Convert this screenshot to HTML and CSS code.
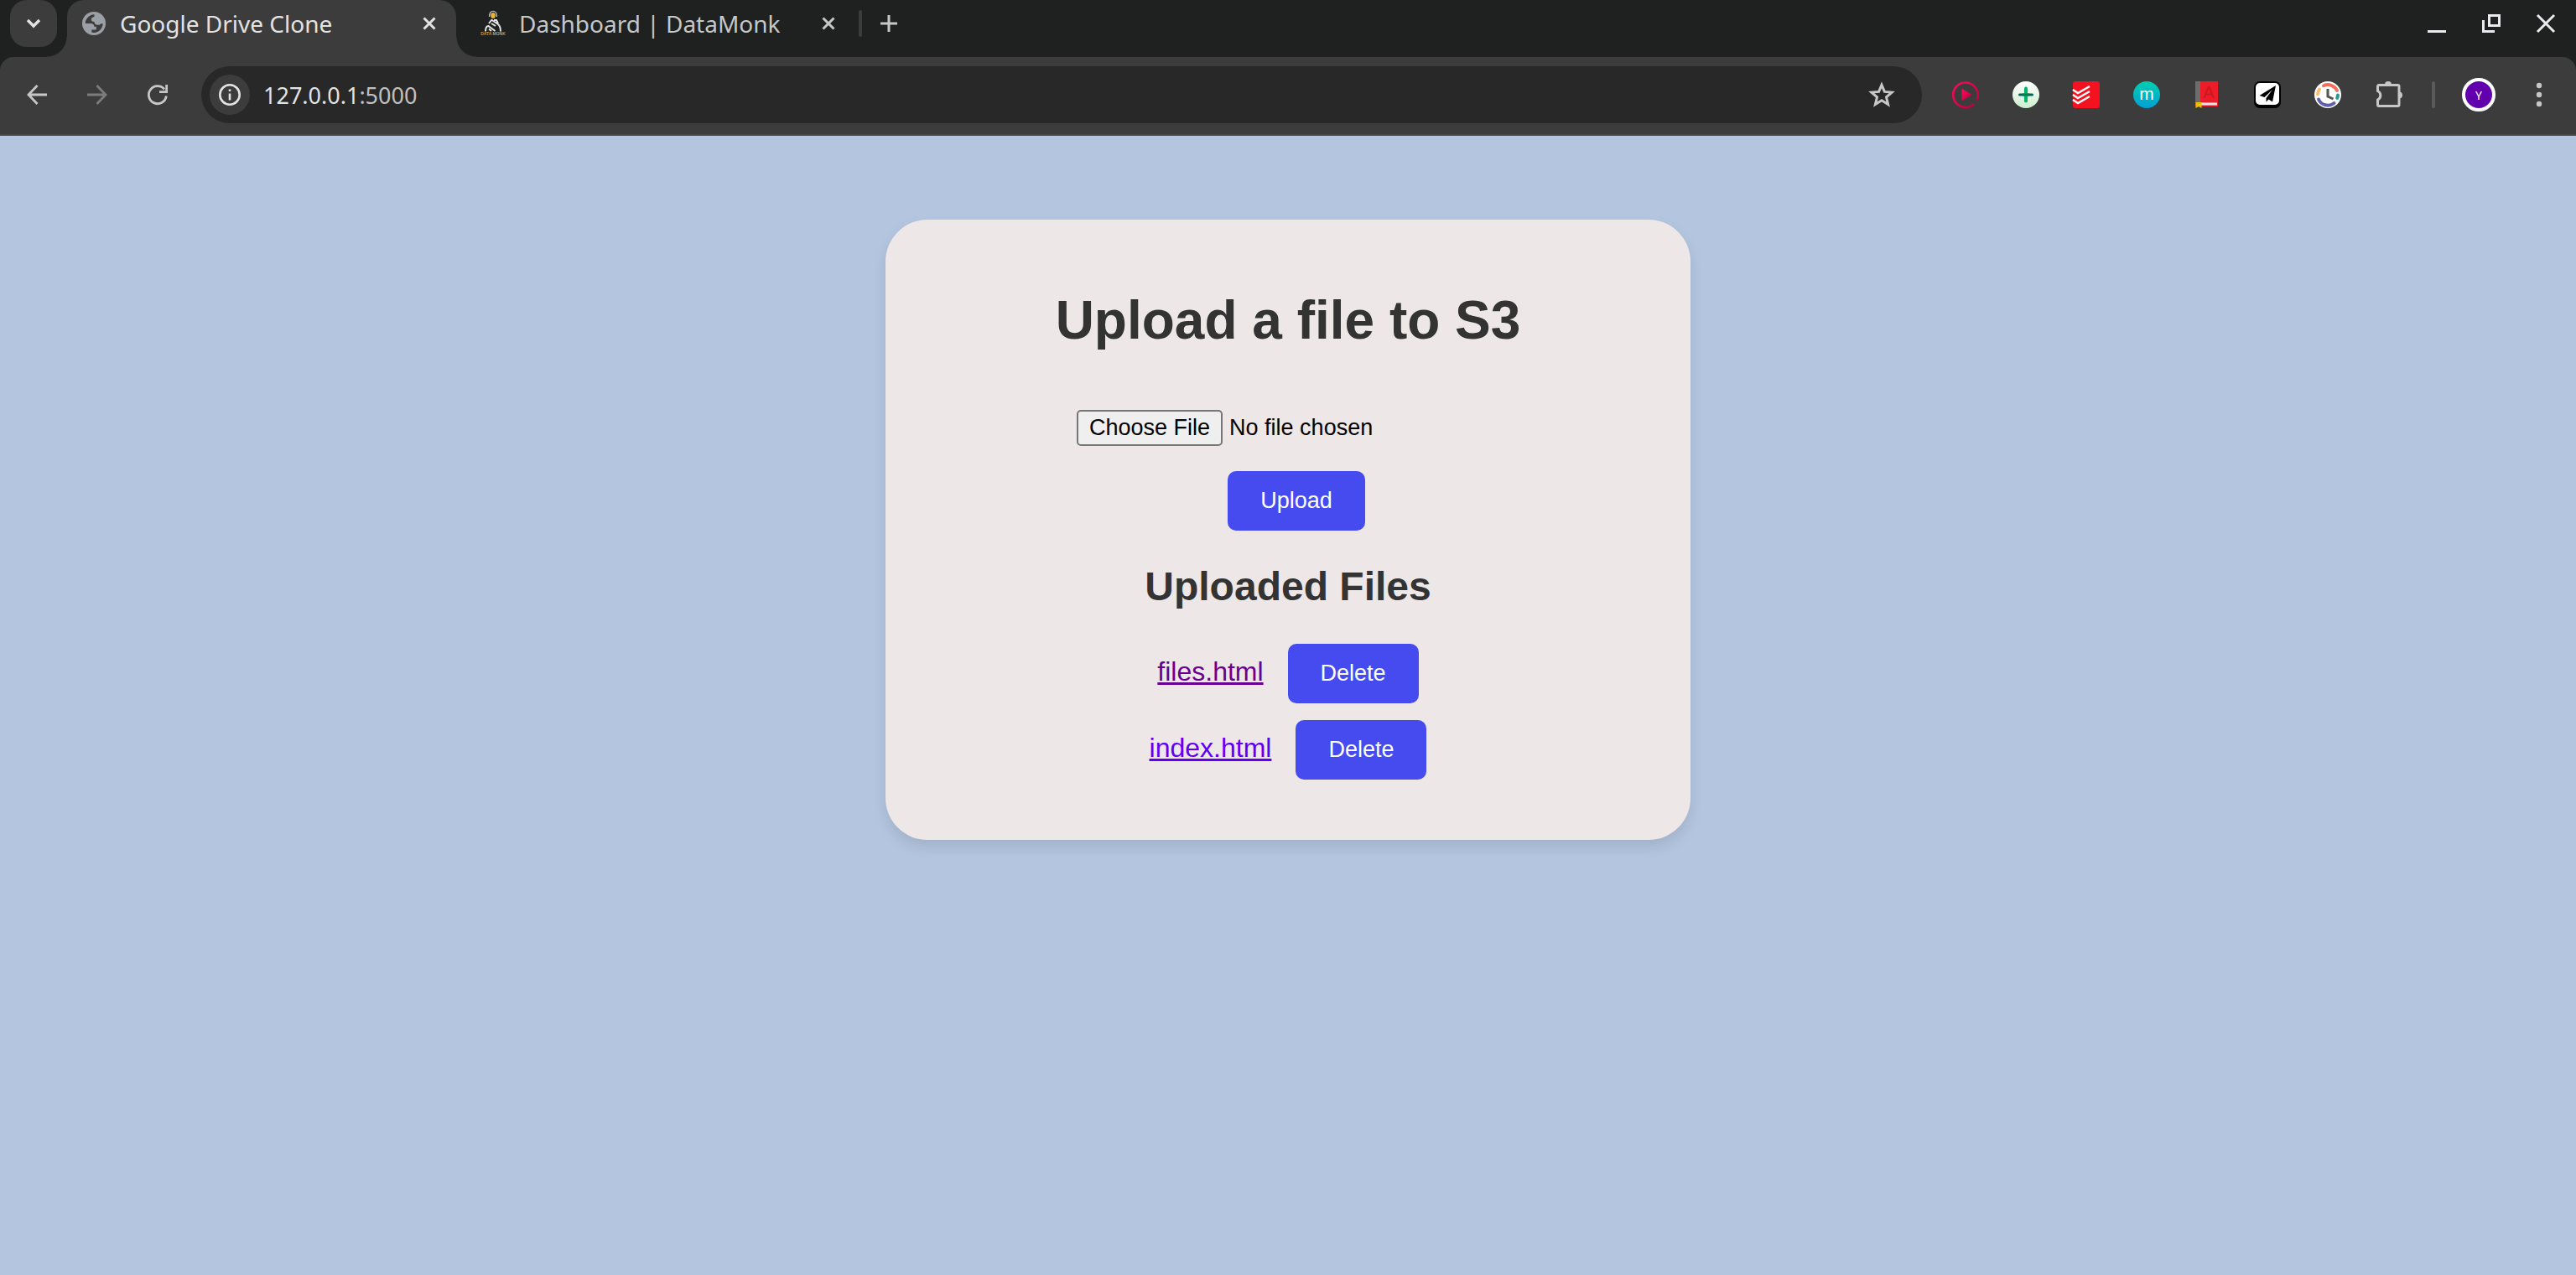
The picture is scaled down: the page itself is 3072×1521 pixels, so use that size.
FILE: index.html
```html
<!DOCTYPE html>
<html lang="en">
<head>
<meta charset="utf-8">
<title>Google Drive Clone</title>
<link rel="stylesheet" href="styles.css">
</head>
<body>
<header class="browser">
  <div class="tabstrip">
    <button class="tab-search" aria-label="Search tabs">
      <svg width="20" height="20" viewBox="0 0 20 20"><path d="M3 6l7 7 7-7" fill="none" stroke="#e3e3e3" stroke-width="3.4"/></svg>
    </button>
    <div class="tab tab-active">
      <svg class="favicon" width="28" height="28" viewBox="0 0 28 28"><circle cx="14" cy="14" r="14" fill="#9aa0a6"/><path d="M14.500 3.200c-3.500 0-6.500 1.600-8.800 4.800-1.300 1.800-2 3.800-2 6h6.600c2.800 0 4 1.500 4 3.800h2.500v3.800h-5.500v3c4.500 1 9-.8 11.200-4.200 1.300-1.800 2-3.800 2.200-6.200h-2.500c-.6 1-1.800 1.500-3.500 1.500-2.700 0-4.200-1.200-4.200-3.800-2.300 0-3.600-.8-3.600-2.500 0-2.800 1.800-2.600 3.600-3.700z" fill="#3c3c3c"/></svg>
      <span class="tab-title">Google Drive Clone</span>
      <button class="icon-button" aria-label="Close tab"><svg width="16" height="16" viewBox="0 0 16 16"><path d="M1.500 1.500l13 13M14.500 1.500l-13 13" stroke="#e3e3e3" stroke-width="3"/></svg></button>
    </div>
    <div class="tab tab-idle">
      <svg class="favicon" width="32" height="32" viewBox="0 0 32 32"><path d="M11.500 8c0-9 9-9 9 0" fill="none" stroke="#cfcfcf" stroke-width="1.200"/><ellipse cx="16" cy="6.500" rx="2.800" ry="3.600" fill="#e8b23c"/><path d="M7 25.500c0-4 .5-6.500 3.500-6.500l8 6M25 25.500c0-4-.5-6.500-3-8.500l-8-5.500M11 16l3.500-4.500M17 12h3l2 4M19 19l-5-3M14 25l-3-2.500" fill="none" stroke="#e4e4e4" stroke-width="2"/><text x="16" y="30" class="logo-text"><tspan fill="#c9963a">DATA</tspan><tspan fill="#a0a0a0"> MONK</tspan></text></svg>
      <span class="tab-title">Dashboard | DataMonk</span>
      <button class="icon-button" aria-label="Close tab"><svg width="16" height="16" viewBox="0 0 16 16"><path d="M1.500 1.500l13 13M14.500 1.500l-13 13" stroke="#c7c7c7" stroke-width="3"/></svg></button>
    </div>
    <span class="tab-divider"></span>
    <button class="icon-button new-tab" aria-label="New tab"><svg width="20" height="20" viewBox="0 0 20 20"><path d="M10 0v20M0 10h20" stroke="#c7c7c7" stroke-width="3"/></svg></button>
    <div class="window-controls">
      <button class="icon-button" aria-label="Minimize"><svg width="22" height="22" viewBox="0 0 22 22"><path d="M0 20.500h22" stroke="#e8eaed" stroke-width="3"/></svg></button>
      <button class="icon-button" aria-label="Restore"><svg width="22" height="22" viewBox="0 0 22 22"><path d="M8.500 1.500h12v12h-12zM1.500 7v13.500H15" fill="none" stroke="#e8eaed" stroke-width="3"/></svg></button>
      <button class="icon-button" aria-label="Close"><svg width="22" height="22" viewBox="0 0 22 22"><path d="M1 1l20 20M21 1L1 21" stroke="#e8eaed" stroke-width="3"/></svg></button>
    </div>
  </div>
  <div class="toolbar">
    <nav class="nav-buttons">
      <button class="icon-button" aria-label="Back"><svg width="24" height="24" viewBox="0 0 24 24"><path d="M24 12H2.500M12.500 1L2 12l10.500 11" fill="none" stroke="#c7c7c7" stroke-width="2.800"/></svg></button>
      <button class="icon-button" aria-label="Forward"><svg width="24" height="24" viewBox="0 0 24 24"><path d="M0 12h21.500M11.500 1L22 12 11.500 23" fill="none" stroke="#7c7c7c" stroke-width="2.800"/></svg></button>
      <button class="icon-button" aria-label="Reload"><svg width="24" height="24" viewBox="0 0 24 24"><path d="M22.300 13.500A10.500 10.500 0 1 1 20 5.500" fill="none" stroke="#c7c7c7" stroke-width="2.800"/><path d="M24 0v10H14V7.300h7.300V0z" fill="#c7c7c7"/></svg></button>
    </nav>
    <div class="omnibox">
      <button class="site-info" aria-label="View site information"><svg width="26" height="26" viewBox="0 0 26 26"><circle cx="13" cy="13" r="11.700" fill="none" stroke="#e3e3e3" stroke-width="2.600"/><path d="M13 11.500v8M13 6.500v2.600" stroke="#e3e3e3" stroke-width="2.600"/></svg></button>
      <span class="address">127.0.0.1<span class="port">:5000</span></span>
      <button class="icon-button" aria-label="Bookmark this tab"><svg width="32" height="32" viewBox="0 0 32 32"><path d="M16 4.200l3.400 8.200 8.800.7-6.700 5.700 2.100 8.700-7.600-4.700-7.600 4.700 2.100-8.700-6.700-5.700 8.800-.7z" fill="none" stroke="#c7c7c7" stroke-width="3"/></svg></button>
    </div>
    <div class="extensions">
      <button class="icon-button" aria-label="Video player"><svg width="32" height="32" viewBox="0 0 32 32"><defs><linearGradient id="pink" x2="1" y2="1"><stop stop-color="#ff0a5c"/><stop offset="1" stop-color="#b3003c"/></linearGradient></defs><path d="M26 27A14.700 14.700 0 1 1 29.500 22" fill="none" stroke="url(#pink)" stroke-width="2.600"/><path d="M12 9.500l11 6.500-11 6.500z" fill="url(#pink)" stroke="url(#pink)" stroke-linejoin="round"/></svg></button>
      <button class="icon-button" aria-label="Add"><svg width="32" height="32" viewBox="0 0 32 32"><defs><linearGradient id="mint" x2="0" y2="1"><stop stop-color="#fff"/><stop offset="1" stop-color="#cdeecf"/></linearGradient></defs><circle cx="16" cy="16" r="16" fill="url(#mint)"/><path d="M8.500 16h15" stroke="#00665a" stroke-width="3" stroke-linecap="round"/><path d="M16 8.500v15" stroke="#00b36b" stroke-width="4" stroke-linecap="round"/><path d="M12 16h8" stroke="#00804f" stroke-width="3"/></svg></button>
      <button class="icon-button" aria-label="Tasks"><svg width="32" height="32" viewBox="0 0 32 32"><rect width="32" height="32" rx="3" fill="#f51220"/><path d="M0 10l6 4 14-8M0 16l6 4 14-8M0 22l6 4 14-8" fill="none" stroke="#fff" stroke-width="2.400"/></svg></button>
      <button class="icon-button" aria-label="Messages"><svg width="32" height="32" viewBox="0 0 32 32"><defs><linearGradient id="teal" x2="0" y2="1"><stop stop-color="#00cfae"/><stop offset="1" stop-color="#00a0d6"/></linearGradient></defs><circle cx="16" cy="16" r="16" fill="url(#teal)"/><text x="16" y="22" class="m-text">m</text></svg></button>
      <button class="icon-button" aria-label="Dictionary"><svg width="32" height="32" viewBox="0 0 32 32"><path d="M2 0h27v30H2z" fill="#ee1c28"/><path d="M2 0h6v26H2z" fill="#6d6d6d"/><text x="18" y="20" class="a-text">A</text><path d="M8 25.500h20v3H8z" fill="#e8e8e8"/><path d="M2.500 25h7v7l-3.500-2-3.500 2z" fill="#e8c300"/></svg></button>
      <button class="icon-button" aria-label="Send"><svg width="32" height="32" viewBox="0 0 32 32"><rect width="32" height="32" rx="7"/><rect x="2" y="2" width="28" height="26" rx="5" fill="#fff"/><path d="M26 5L6.500 17l6 2L22 10l-7.500 10v4.500l3-3 4.500 3z"/></svg></button>
      <button class="icon-button" aria-label="Timer"><svg width="32" height="32" viewBox="0 0 32 32"><circle cx="16" cy="16" r="16" fill="#fff"/><g fill="none" stroke-width="4" stroke-linecap="round"><path d="M11 5.200A12 12 0 0 1 27 11" stroke="#f4705c"/><path d="M28 16.500a12 12 0 0 1-.8 3.500" stroke="#2a9d8f"/><path d="M23.500 26A12 12 0 0 1 5 21.500" stroke="#5d62a8"/><path d="M4 15.500a12 12 0 0 1 2-6" stroke="#fdbb6b"/></g><path d="M16 9v9l6.500 3" fill="none" stroke="#555" stroke-width="3"/></svg></button>
      <button class="icon-button" aria-label="Extensions"><svg width="34" height="34" viewBox="0 0 34 34"><path d="M4.500 5.500h23a1.500 1.500 0 0 1 1.500 1.500v22a1.500 1.500 0 0 1-1.500 1.500h-23A1.500 1.500 0 0 1 3.500 29v-6a5.800 5.800 0 0 0 0-10.500V7a1.500 1.500 0 0 1 1-1.500z" fill="none" stroke="#c7c7c7" stroke-width="3"/><path d="M12 5a4 4 0 0 1 8 0zM29 13.500a4 4 0 0 1 0 8z" fill="#c7c7c7"/></svg></button>
    </div>
    <span class="toolbar-divider"></span>
    <button class="avatar" aria-label="Profile">Y</button>
    <button class="icon-button menu" aria-label="Menu"><svg width="8" height="30" viewBox="0 0 8 30"><g fill="#c7c7c7"><circle cx="4" cy="4" r="3.200"/><circle cx="4" cy="15" r="3.200"/><circle cx="4" cy="26" r="3.200"/></g></svg></button>
  </div>
</header>
<main class="page">
  <section class="card">
    <h1 class="title">Upload a file to S3</h1>
    <form class="upload-form">
      <input class="file-input" type="file" aria-label="File to upload">
      <button class="button" type="button">Upload</button>
    </form>
    <h2 class="subtitle">Uploaded Files</h2>
    <ul class="files">
      <li class="file"><a class="file-link file-link-visited" href="#files">files.html</a><button class="button">Delete</button></li>
      <li class="file"><a class="file-link" href="#index">index.html</a><button class="button">Delete</button></li>
    </ul>
  </section>
</main>
</body>
</html>
```
FILE: styles.css
```css
* {
  box-sizing: border-box;
}

body {
  margin: 0;
  min-height: 100vh;
  background: #b3c5df;
  font-family: "Liberation Sans", Arial, sans-serif;
}

button {
  border: 0;
  padding: 0;
  font-family: inherit;
}

svg {
  display: block;
  flex: none;
  overflow: visible;
}

/* Browser chrome */
.browser {
  background: #1f2120;
  font-family: "Noto Sans", sans-serif;
}

.tabstrip {
  display: flex;
  height: 68px;
  padding: 0 25px 0 12px;
}

.icon-button {
  display: grid;
  place-items: center;
  background: none;
}

.tab-search {
  display: grid;
  place-items: center;
  width: 56px;
  height: 56px;
  margin-right: 12px;
  border-radius: 20px;
  background: #3c3c3c;
}

.tab {
  display: flex;
  align-items: center;
  padding-bottom: 12px;
  font-size: 28px;
  line-height: 36px;
  white-space: nowrap;
}

.tab-title {
  flex: 1;
}

.tab-active {
  position: relative;
  width: 464px;
  gap: 17px;
  padding-left: 18px;
  padding-right: 24px;
  border-radius: 20px 20px 0 0;
  background: #3c3c3c;
  color: #e3e3e3;
}

.tab-active::before,
.tab-active::after {
  content: "";
  position: absolute;
  bottom: 0;
  width: 24px;
  height: 24px;
}

.tab-active::before {
  right: 100%;
  background: radial-gradient(circle at 0 0, transparent 23px, #3c3c3c 24px);
}

.tab-active::after {
  left: 100%;
  background: radial-gradient(circle at 100% 0, transparent 23px, #3c3c3c 24px);
}

.tab-idle {
  width: 480px;
  gap: 15px;
  padding-left: 28px;
  padding-right: 28px;
  color: #c7c7c7;
}

.tab-divider {
  width: 4px;
  height: 32px;
  margin-top: 12px;
  border-radius: 2px;
  background: #3c3c3c;
}

.new-tab {
  height: 56px;
  margin-left: 22px;
}

.window-controls {
  display: flex;
  gap: 43px;
  height: 56px;
  margin-left: auto;
}

.logo-text {
  font-family: "Liberation Sans", sans-serif;
  font-size: 5px;
  font-weight: 700;
  text-anchor: middle;
}

.toolbar {
  display: flex;
  align-items: center;
  height: 94px;
  padding: 0 40px 2px 32px;
  border-bottom: 2px solid #474747;
  border-radius: 16px 16px 0 0;
  background: #3c3c3c;
}

.nav-buttons {
  display: flex;
  gap: 48px;
  margin-right: 40px;
}

.omnibox {
  display: flex;
  flex: 1;
  align-items: center;
  height: 68px;
  padding: 0 32px 0 10px;
  border-radius: 34px;
  background: #282828;
}

.site-info {
  display: grid;
  place-items: center;
  width: 48px;
  height: 48px;
  border-radius: 50%;
  background: #3c3c3c;
}

.address {
  flex: 1;
  margin-left: 16px;
  color: #e3e3e3;
  font-size: 27px;
}

.port {
  color: #c0c0c0;
}

.extensions {
  display: flex;
  align-items: center;
  gap: 40px;
  margin: 0 34px 0 36px;
}

.m-text {
  fill: #fff;
  font-family: "Liberation Sans", sans-serif;
  font-size: 21px;
  text-anchor: middle;
}

.a-text {
  fill: #c91722;
  font-family: "Liberation Sans", sans-serif;
  font-size: 20px;
  text-anchor: middle;
}

.toolbar-divider {
  width: 4px;
  height: 32px;
  border-radius: 2px;
  background: #5a5a5a;
}

.avatar {
  width: 40px;
  height: 40px;
  margin: 0 48px 0 32px;
  border: 4px solid #fff;
  border-radius: 50%;
  background: #6200ae;
  color: #fff;
  font-size: 14px;
}

/* Page */
.page {
  padding: 100px 24px;
}

.card {
  width: 100%;
  max-width: 960px;
  margin: 0 auto;
  padding: 40px;
  border-radius: 50px;
  background: #ede7e7;
  box-shadow: 0 8px 16px rgba(0, 0, 0, 0.1);
  color: #333;
  text-align: center;
}

.title {
  margin: 44px 0 70px;
  font-size: 64px;
  line-height: 73px;
}

.upload-form {
  display: flex;
  flex-direction: column;
  align-items: center;
  gap: 30px;
}

.file-input {
  width: 504px;
  color: #000;
  font: 27px/31px "Liberation Sans", Arial, sans-serif;
}

.file-input::file-selector-button {
  margin: 0 8px 0 0;
  padding: 4px 13px;
  border: 2px solid #767676;
  border-radius: 5px;
  background: #efefef;
  color: #000;
  font: inherit;
}

.button {
  margin-left: 20px;
  padding: 20px 39px;
  border-radius: 10px;
  background: #454bee;
  color: #fff;
  font-size: 27px;
  line-height: 31px;
}

.subtitle {
  margin: 39px 0 41px;
  font-size: 48px;
  line-height: 55px;
}

.files {
  display: flex;
  flex-direction: column;
  gap: 20px;
  margin: 0 0 32px;
  padding: 0;
  list-style: none;
}

.file {
  display: flex;
  align-items: baseline;
  justify-content: center;
  gap: 9px;
}

.file-link {
  color: #5f00f5;
  font-size: 32px;
  text-decoration-thickness: 3px;
}

.file-link-visited {
  color: #6a0091;
}
```
